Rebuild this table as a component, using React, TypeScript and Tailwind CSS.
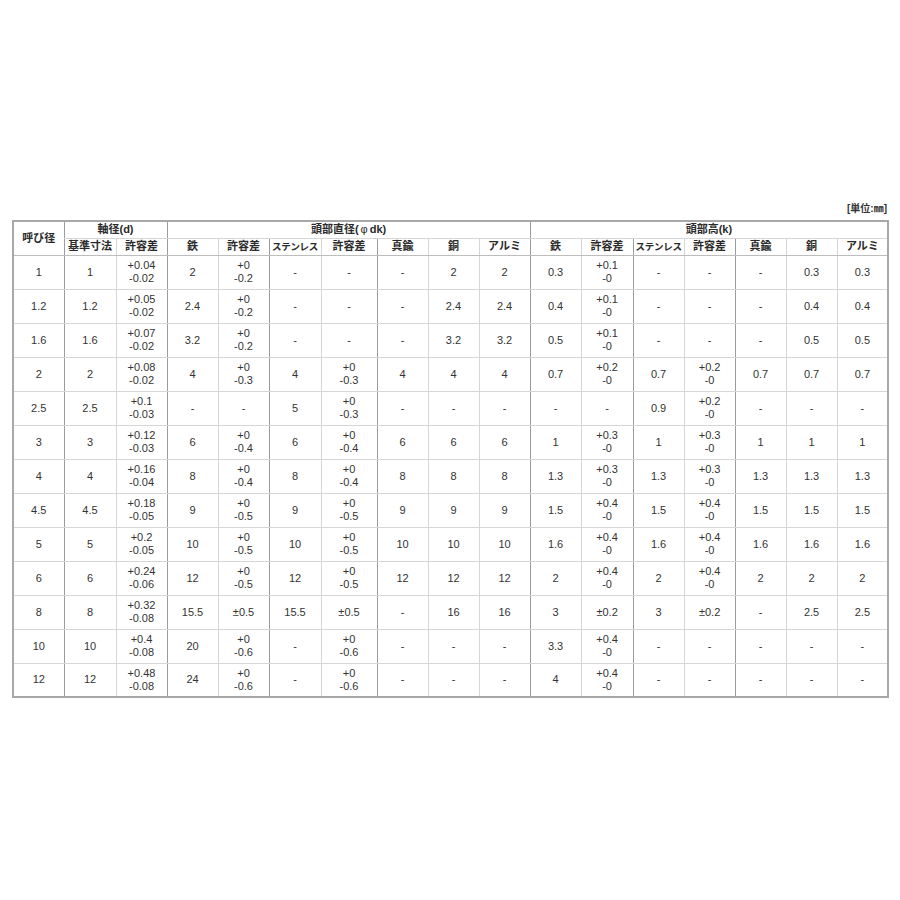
import React from 'react';

const WIDTHS = [
  'w-[51px]', 'w-[52px]', 'w-[51px]', 'w-[51px]', 'w-[51px]', 'w-[52px]', 'w-[56px]', 'w-[51px]', 'w-[51px]',
  'w-[51px]', 'w-[51px]', 'w-[52px]', 'w-[51px]', 'w-[51px]', 'w-[51px]', 'w-[51px]', 'w-[51px]',
];

// darker vertical rule on the left of these columns (group separators)
const DARK = 'border-l border-l-[#9c9c9c]';
const LIGHT = 'border-l border-l-[#d6d6d6]';
const LEFT = [
  DARK, DARK, LIGHT, DARK, LIGHT, DARK, LIGHT, DARK, LIGHT,
  LIGHT, DARK, LIGHT, DARK, LIGHT, DARK, LIGHT, LIGHT,
];

const SUB_HEADERS = [
  '基準寸法', '許容差',
  '鉄', '許容差', 'ステンレス', '許容差', '真鍮', '銅', 'アルミ',
  '鉄', '許容差', 'ステンレス', '許容差', '真鍮', '銅', 'アルミ',
];

const ROWS: string[][] = [
  ['1', '1', '+0.04\n-0.02', '2', '+0\n-0.2', '-', '-', '-', '2', '2', '0.3', '+0.1\n-0', '-', '-', '-', '0.3', '0.3'],
  ['1.2', '1.2', '+0.05\n-0.02', '2.4', '+0\n-0.2', '-', '-', '-', '2.4', '2.4', '0.4', '+0.1\n-0', '-', '-', '-', '0.4', '0.4'],
  ['1.6', '1.6', '+0.07\n-0.02', '3.2', '+0\n-0.2', '-', '-', '-', '3.2', '3.2', '0.5', '+0.1\n-0', '-', '-', '-', '0.5', '0.5'],
  ['2', '2', '+0.08\n-0.02', '4', '+0\n-0.3', '4', '+0\n-0.3', '4', '4', '4', '0.7', '+0.2\n-0', '0.7', '+0.2\n-0', '0.7', '0.7', '0.7'],
  ['2.5', '2.5', '+0.1\n-0.03', '-', '-', '5', '+0\n-0.3', '-', '-', '-', '-', '-', '0.9', '+0.2\n-0', '-', '-', '-'],
  ['3', '3', '+0.12\n-0.03', '6', '+0\n-0.4', '6', '+0\n-0.4', '6', '6', '6', '1', '+0.3\n-0', '1', '+0.3\n-0', '1', '1', '1'],
  ['4', '4', '+0.16\n-0.04', '8', '+0\n-0.4', '8', '+0\n-0.4', '8', '8', '8', '1.3', '+0.3\n-0', '1.3', '+0.3\n-0', '1.3', '1.3', '1.3'],
  ['4.5', '4.5', '+0.18\n-0.05', '9', '+0\n-0.5', '9', '+0\n-0.5', '9', '9', '9', '1.5', '+0.4\n-0', '1.5', '+0.4\n-0', '1.5', '1.5', '1.5'],
  ['5', '5', '+0.2\n-0.05', '10', '+0\n-0.5', '10', '+0\n-0.5', '10', '10', '10', '1.6', '+0.4\n-0', '1.6', '+0.4\n-0', '1.6', '1.6', '1.6'],
  ['6', '6', '+0.24\n-0.06', '12', '+0\n-0.5', '12', '+0\n-0.5', '12', '12', '12', '2', '+0.4\n-0', '2', '+0.4\n-0', '2', '2', '2'],
  ['8', '8', '+0.32\n-0.08', '15.5', '±0.5', '15.5', '±0.5', '-', '16', '16', '3', '±0.2', '3', '±0.2', '-', '2.5', '2.5'],
  ['10', '10', '+0.4\n-0.08', '20', '+0\n-0.6', '-', '+0\n-0.6', '-', '-', '-', '3.3', '+0.4\n-0', '-', '-', '-', '-', '-'],
  ['12', '12', '+0.48\n-0.08', '24', '+0\n-0.6', '-', '+0\n-0.6', '-', '-', '-', '4', '+0.4\n-0', '-', '-', '-', '-', '-'],
];

const jp = "font-['Liberation_Sans','Noto_Sans_CJK_JP',sans-serif]";

export default function App() {
  return (
    <div className="min-h-[900px] w-[900px] bg-white pt-[202px] pl-[12px]">
      <div className={`w-[875px] text-right text-[10px] font-bold leading-[14px] text-[#333] ${jp}`}>
        [単位:㎜]
      </div>
      <table className={`mt-[4px] w-[875px] table-fixed border-collapse border-2 border-[#a8a8a8] text-[#333] ${jp}`}>
        <colgroup>
          {WIDTHS.map((w, i) => (
            <col key={i} className={w} />
          ))}
        </colgroup>
        <thead>
          <tr className="h-[17px] text-[11px] font-bold leading-[13px] text-[#2a2a2a]">
            <th rowSpan={2} className="border-b border-b-[#bdbdbd] text-center font-bold">呼び径</th>
            <th colSpan={2} className={`${DARK} border-b border-b-[#d6d6d6] text-center font-bold`}>軸径(d)</th>
            <th colSpan={7} className={`${DARK} border-b border-b-[#d6d6d6] text-center font-bold`}>
              頭部直径(<span className="mx-[2px] font-normal">φ</span>dk)
            </th>
            <th colSpan={7} className={`${DARK} border-b border-b-[#d6d6d6] text-center font-bold`}>頭部高(k)</th>
          </tr>
          <tr className="h-[17px] text-[11px] leading-[13px] text-[#2a2a2a]">
            {SUB_HEADERS.map((h, i) => (
              <th
                key={i}
                className={`${LEFT[i + 1]} border-b border-b-[#bdbdbd] p-0 text-center font-bold ${
                  h === 'ステンレス' ? 'text-[9.5px] tracking-[-0.3px]' : ''
                }`}
              >
                {h}
              </th>
            ))}
          </tr>
        </thead>
        <tbody>
          {ROWS.map((row, r) => (
            <tr key={r} className="h-[34px]">
              {row.map((cell, c) => (
                <td
                  key={c}
                  className={`${c > 0 ? LEFT[c] : ''} border-b border-b-[#d6d6d6] p-0 text-center align-middle text-[11px] leading-[13px] whitespace-pre-line`}
                >
                  {cell}
                </td>
              ))}
            </tr>
          ))}
        </tbody>
      </table>
    </div>
  );
}
